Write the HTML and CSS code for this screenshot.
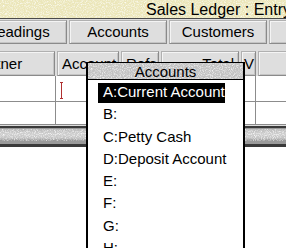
FILE: index.html
```html
<!DOCTYPE html>
<html>
<head>
<meta charset="utf-8">
<link rel="stylesheet" href="styles.css">
</head>
<body>
<svg class="defs" width="0" height="0" aria-hidden="true">
  <filter id="grain" x="0" y="0" width="100%" height="100%">
    <feTurbulence type="fractalNoise" baseFrequency="0.9" numOctaves="2" seed="3"/>
    <feColorMatrix type="matrix" values="0 0 0 0 1  0 0 0 0 1  0 0 0 0 1  0 0 0 -2.2 1.25"/>
  </filter>
</svg>
<div class="window">
  <div class="titlebar">
    <svg class="grain"><rect width="100%" height="100%" filter="url(#grain)"/></svg>
    <span class="title">Sales Ledger : Entry</span>
  </div>
  <div class="tabs">
    <div class="tab">Headings</div>
    <div class="tab">Accounts</div>
    <div class="tab">Customers</div>
    <div class="tab">Mail</div>
  </div>
  <div class="header">
    <div class="hcell c1">Partner</div>
    <div class="hcell c2">Account</div>
    <div class="hcell c3">Refs</div>
    <div class="hcell c4 right">Total</div>
    <div class="hcell c5">V</div>
    <div class="hcell c6"></div>
  </div>
  <div class="grid">
    <div class="row">
      <div class="cell c1"></div>
      <div class="cell c2"><span class="caret"></span></div>
      <div class="cell c3"></div>
      <div class="cell c4"></div>
      <div class="cell c5"></div>
      <div class="cell c6"></div>
    </div>
    <div class="row">
      <div class="cell c1"></div>
      <div class="cell c2"></div>
      <div class="cell c3"></div>
      <div class="cell c4"></div>
      <div class="cell c5"></div>
      <div class="cell c6"></div>
    </div>
  </div>
  <div class="hscroll"><div class="well"><svg class="grain"><rect width="100%" height="100%" filter="url(#grain)"/></svg></div></div>
  <div class="below"></div>

  <div class="menu">
    <div class="menu-title">
      <svg class="grain"><rect width="100%" height="100%" filter="url(#grain)"/></svg>
      <span class="menu-title-text">Accounts</span>
    </div>
    <ul class="menu-items">
      <li class="sel"><span>A:Current Account</span></li>
      <li><span>B:</span></li>
      <li><span>C:Petty Cash</span></li>
      <li><span>D:Deposit Account</span></li>
      <li><span>E:</span></li>
      <li><span>F:</span></li>
      <li><span>G:</span></li>
      <li><span>H:</span></li>
    </ul>
  </div>
</div>
</body>
</html>
```
FILE: styles.css
```css
html, body {
  margin: 0;
  padding: 0;
}
body {
  width: 286px;
  height: 248px;
  overflow: hidden;
  background: #ffffff;
  font-family: "Liberation Sans", Arial, sans-serif;
  color: #000;
}
.defs {
  position: absolute;
  width: 0;
  height: 0;
}
.grain {
  position: absolute;
  left: 0;
  top: 0;
  width: 100%;
  height: 100%;
  opacity: 0.9;
}
.window {
  position: relative;
  width: 286px;
  height: 248px;
  overflow: hidden;
  background: #dddddd;
  display: flex;
  flex-direction: column;
}
.titlebar {
  position: relative;
  height: 18px;
  flex: none;
  background: #ebe6b9;
  border-bottom: 1px solid #4a4a4a;
  white-space: nowrap;
  overflow: hidden;
}
.title {
  position: relative;
  display: block;
  padding-left: 146px;
  font-size: 16px;
  line-height: 19px;
}
.tabs {
  flex: none;
  display: flex;
  gap: 2px;
  margin-left: -31px;
  padding-top: 1px;
  height: 24px;
}
.tab {
  flex: none;
  width: 96px;
  height: 22px;
  border: 1px solid #8a8a8a;
  border-left-color: #b0b0b0;
  border-top-color: #b0b0b0;
  box-shadow: inset 1px 1px 0 #f4f4f4, inset -1px -1px 0 #c4c4c4;
  background: #dedede;
  font-size: 15px;
  line-height: 22px;
  text-align: center;
  white-space: nowrap;
}
.header {
  flex: none;
  display: flex;
  gap: 2px;
  margin-top: 7px;
  height: 25px;
}
.hcell {
  flex: none;
  box-sizing: border-box;
  height: 25px;
  border: 1px solid #8a8a8a;
  border-left-color: #b0b0b0;
  border-top-color: #b0b0b0;
  box-shadow: inset 1px 1px 0 #f4f4f4, inset -1px -1px 0 #c4c4c4;
  background: #dedede;
  font-size: 15px;
  line-height: 23px;
  padding: 0 4px;
  white-space: nowrap;
  overflow: hidden;
}
.hcell.right { text-align: right; }
.header .c1 { width: 87px; margin-left: -32px; }
.header .c2 { width: 62px; }
.header .c3 { width: 38px; }
.header .c4 { width: 78px; }
.header .c5 { width: 15px; padding: 0 2px; }
.header .c6 { width: 40px; }

.grid {
  flex: none;
  background: #ffffff;
}
.row {
  display: flex;
  height: 25px;
  border-bottom: 1px solid #8c8c8c;
}
.row + .row { height: 22px; }
.cell {
  flex: none;
  box-sizing: border-box;
  border-right: 1px solid #8c8c8c;
  position: relative;
}
.grid .c1 { width: 56px; }
.grid .c2 { width: 64px; }
.grid .c3 { width: 40px; }
.grid .c4 { width: 80px; }
.grid .c5 { width: 16px; }
.grid .c6 { width: 40px; border-right: none; }

.caret {
  position: absolute;
  left: 5px;
  top: 6px;
  width: 1px;
  height: 17px;
  background: #b03030;
}
.caret::before, .caret::after {
  content: "";
  position: absolute;
  left: -1px;
  width: 3px;
  height: 1px;
  background: #b03030;
}
.caret::before { top: 0; }
.caret::after { bottom: 0; }

.hscroll {
  flex: none;
  height: 14px;
  margin-top: 1px;
  border-top: 2px solid #3a3a3a;
  border-bottom: 3px solid #3a3a3a;
  background: #9a9a9a;
  padding: 1px 0 1px;
}
.well {
  position: relative;
  height: 12px;
  background: linear-gradient(#b8b8b8, #cfcfcf 40%, #c4c4c4 75%, #8f8f8f);
  overflow: hidden;
}
.below {
  flex: 1;
  background: #ffffff;
}

.menu {
  position: absolute;
  left: 86px;
  top: 62px;
  width: 155px;
  height: 200px;
  background: #ffffff;
  border: 2px solid #000;
  border-top-width: 1px;
}
.menu-title {
  position: relative;
  height: 16px;
  background: #c2c2c2;
  border-bottom: 1px solid #000;
  text-align: center;
  overflow: hidden;
}
.menu-title-text {
  position: relative;
  font-size: 15px;
  line-height: 17px;
}
.menu-items {
  list-style: none;
  margin: 0;
  padding: 1px 0 0 10px;
}
.menu-items li {
  height: 22.25px;
  line-height: 22.25px;
  font-size: 15px;
  white-space: nowrap;
}
.menu-items li span {
  padding-left: 5px;
}
.menu-items li.sel {
  width: 127px;
  color: #fff;
  background: linear-gradient(transparent 2.5px, #000 2.5px);
}
```
